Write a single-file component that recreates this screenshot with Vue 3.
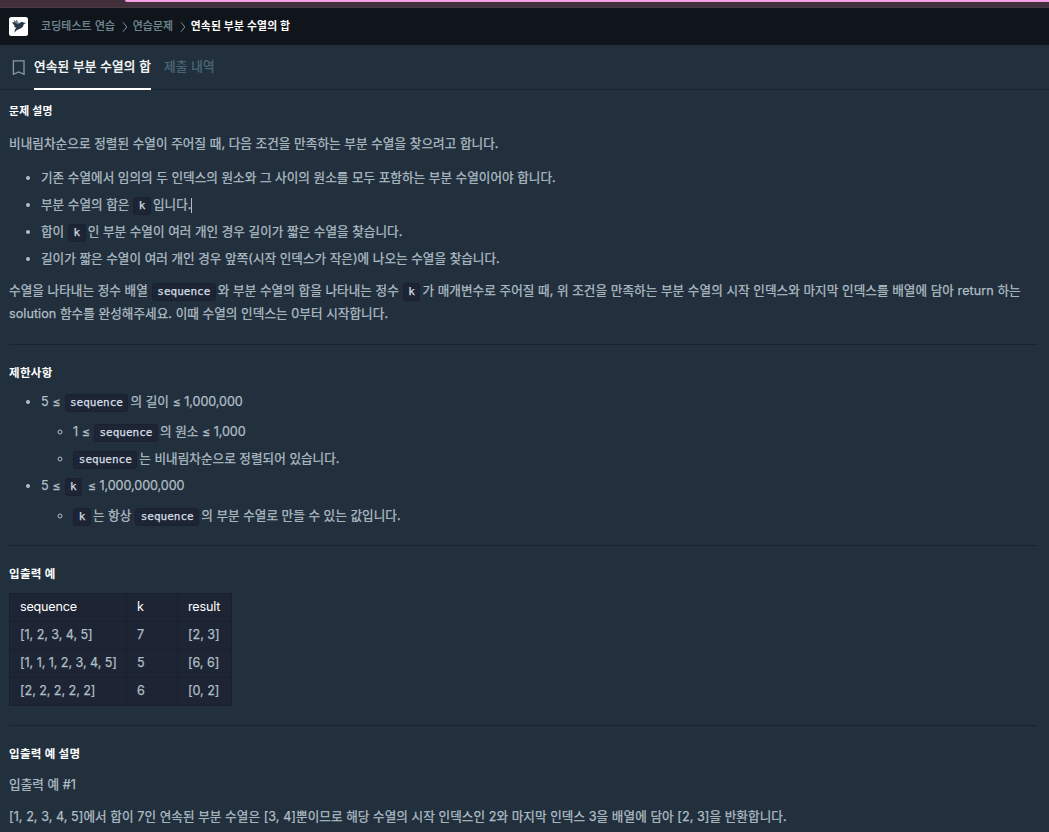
<template>
  <div class="page">
    <div class="window-strip">
      <div class="window-tab"></div>
    </div>
    <header class="navbar">
      <svg class="logo" viewBox="0 0 19 19">
        <rect width="19" height="19" rx="2.5" fill="#fff" />
        <path
          d="M3.2 5.2 L5.2 5.3 L4.8 3.3 L7 4.4 L7.4 2.8 L9.3 5.6 L9.8 7.1 C10.6 5.3 12.6 4.6 14.2 5.4 L17.4 6.1 L14.8 7 C14.5 9.7 12.8 11.4 10.3 12 L7.6 13.2 L5.4 15.7 L6 12.5 L7.4 10.8 C5.6 10.4 5 9.4 4.8 8.5 L6.4 8.4 C4.7 7.8 3.6 6.8 3.2 5.2 Z"
          fill="#263747"
        />
        <path d="M5.2 5.3 L4.8 3.3 L7 4.4 L7.4 2.8 L9.3 5.6 L9.2 7.2 Z" fill="#7b8792" />
      </svg>
      <nav class="breadcrumb">
        <template v-for="(crumb, i) in crumbs" :key="crumb">
          <svg v-if="i > 0" class="chevron" viewBox="0 0 6 10">
            <path d="M1 .3 L4.8 5 L1 9.7" fill="none" stroke="#78909c" stroke-width="1" />
          </svg>
          <span :class="i === crumbs.length - 1 ? 'current' : 'parent'">{{ crumb }}</span>
        </template>
      </nav>
    </header>
    <div class="tabs">
      <svg class="bookmark" viewBox="0 0 13 16">
        <path d="M1.4 .9 H12 V14.3 L6.7 11.9 L1.4 14.3 Z" fill="none" stroke="#8799a8" stroke-width="1.3" />
      </svg>
      <a
        v-for="tab in tabs"
        :key="tab"
        class="tab"
        :class="{ active: tab === activeTab }"
        @click="activeTab = tab"
      >{{ tab }}</a>
    </div>
    <main class="description">
      <h5 class="title">문제 설명</h5>
      <p>비내림차순으로 정렬된 수열이 주어질 때, 다음 조건을 만족하는 부분 수열을 찾으려고 합니다.</p>
      <ul class="conditions">
        <li>기존 수열에서 임의의 두 인덱스의 원소와 그 사이의 원소를 모두 포함하는 부분 수열이어야 합니다.</li>
        <li>부분 수열의 합은 <code>k</code>입니다.<i class="caret"></i></li>
        <li>합이 <code>k</code>인 부분 수열이 여러 개인 경우 길이가 짧은 수열을 찾습니다.</li>
        <li>길이가 짧은 수열이 여러 개인 경우 앞쪽(시작 인덱스가 작은)에 나오는 수열을 찾습니다.</li>
      </ul>
      <p>수열을 나타내는 정수 배열 <code>sequence</code>와 부분 수열의 합을 나타내는 정수 <code>k</code>가 매개변수로 주어질 때, 위 조건을 만족하는 부분 수열의 시작 인덱스와 마지막 인덱스를 배열에 담아 return 하는<br />solution 함수를 완성해주세요. 이때 수열의 인덱스는 0부터 시작합니다.</p>
      <hr />
      <h5>제한사항</h5>
      <ul class="limits">
        <li>5 ≤ <code>sequence</code>의 길이 <span class="num">≤ 1,000,000</span>
          <ul>
            <li>1 ≤ <code>sequence</code>의 원소 <span class="num">≤ 1,000</span></li>
            <li><code>sequence</code>는 비내림차순으로 정렬되어 있습니다.</li>
          </ul>
        </li>
        <li>5 ≤ <code>k</code> <span class="num">≤ 1,000,000,000</span>
          <ul>
            <li><code>k</code>는 항상 <code>sequence</code>의 부분 수열로 만들 수 있는 값입니다.</li>
          </ul>
        </li>
      </ul>
      <hr />
      <h5>입출력 예</h5>
      <table>
        <thead>
          <tr>
            <th class="col-sequence">sequence</th>
            <th class="col-k">k</th>
            <th class="col-result">result</th>
          </tr>
        </thead>
        <tbody>
          <tr v-for="row in examples" :key="row.sequence">
            <td>{{ row.sequence }}</td>
            <td>{{ row.k }}</td>
            <td>{{ row.result }}</td>
          </tr>
        </tbody>
      </table>
      <hr />
      <h5>입출력 예 설명</h5>
      <p>입출력 예 #1</p>
      <p>[1, 2, 3, 4, 5]에서 합이 7인 연속된 부분 수열은 [3, 4]뿐이므로 해당 수열의 시작 인덱스인 2와 마지막 인덱스 3을 배열에 담아 [2, 3]을 반환합니다.</p>
    </main>
  </div>
</template>

<script setup>
import { ref } from 'vue';

const crumbs = ['코딩테스트 연습', '연습문제', '연속된 부분 수열의 합'];
const tabs = ['연속된 부분 수열의 합', '제출 내역'];
const activeTab = ref(tabs[0]);

const examples = [
  { sequence: '[1, 2, 3, 4, 5]', k: 7, result: '[2, 3]' },
  { sequence: '[1, 1, 1, 2, 3, 4, 5]', k: 5, result: '[6, 6]' },
  { sequence: '[2, 2, 2, 2, 2]', k: 6, result: '[0, 2]' },
];
</script>

<style>
html,
body {
  margin: 0;
  background: #22303d;
  overflow: hidden;
}
</style>

<style scoped>
.page {
  height: 832px;
  overflow: hidden;
  background: #22303d;
  color: #b0bec5;
  font-family: Inter, "Noto Sans CJK KR", sans-serif;
  font-size: 12.6px;
  font-weight: 400;
  letter-spacing: 0.06px;
}

.window-strip {
  height: 8px;
  box-sizing: border-box;
  background: #432f3b;
  border-bottom: 1px solid #493b43;
}

.window-tab {
  height: 2px;
  margin-left: 125px;
  background: #f5a3e6;
  border-bottom-left-radius: 4px;
}

.navbar {
  display: flex;
  align-items: center;
  height: 37px;
  padding-left: 9px;
  background: #10151b;
}

.logo {
  width: 19px;
  height: 19px;
}

.breadcrumb {
  display: flex;
  align-items: center;
  margin-left: 13px;
  color: #78909c;
  font-size: 10.8px;
  letter-spacing: 0.2px;
  line-height: 18px;
  white-space: nowrap;
}

.parent {
  -webkit-text-stroke: 0.25px currentColor;
}

.current {
  color: #fff;
  font-weight: 700;
}

.chevron {
  width: 6px;
  height: 10px;
  margin: 0 5px 0 6.5px;
}

.tabs {
  display: flex;
  height: 45px;
  box-sizing: border-box;
  padding-left: 12px;
  border-bottom: 1px solid #172334;
}

.bookmark {
  width: 13px;
  height: 16px;
  margin: 15px 9px 0 0;
}

.tab {
  height: 45px;
  box-sizing: border-box;
  margin-right: 13px;
  color: #4c6a79;
  letter-spacing: 0.18px;
  line-height: 43px;
  white-space: nowrap;
  -webkit-text-stroke: 0.25px currentColor;
}

.tab.active {
  color: #fff;
  border-bottom: 2px solid #fff;
  -webkit-text-stroke-width: 0.4px;
}

.description {
  padding: 13px 12px 0 9px;
  line-height: 23px;
  white-space: nowrap;
}

h5 {
  margin: 0;
  color: #fff;
  font-size: 11.5px;
  font-weight: 700;
  letter-spacing: 0.3px;
  line-height: 18px;
}

h5.title {
  font-size: 10.8px;
}

p {
  margin: 9px 0 0;
}

h5 + p {
  margin-top: 10px;
}

.title + p {
  margin-top: 11px;
}

p,
li,
td {
  -webkit-text-stroke: 0.25px currentColor;
}

li {
  letter-spacing: 0.03px;
}

ul {
  margin: 0;
  padding-left: 32px;
}

.conditions {
  margin-top: 11px;
}

.conditions li {
  margin-bottom: 4px;
}

.limits {
  margin-top: 8px;
}

.limits ul {
  margin: 7px 0 4px;
}

.limits ul li + li {
  margin-top: 4px;
}

.num {
  letter-spacing: -0.07px;
}

code {
  display: inline-block;
  height: 18px;
  box-sizing: border-box;
  margin: 0 2px 0 0.3px;
  padding: 0 4.5px;
  border: 1px solid #1a2031;
  border-radius: 3px;
  background: #1d2433;
  color: #d5dfe6;
  font-family: "DejaVu Sans Mono", monospace;
  font-size: 11px;
  letter-spacing: 0;
  line-height: 16px;
}

.caret {
  display: inline-block;
  width: 1px;
  height: 15px;
  background: #b0bec5;
  vertical-align: -4px;
}

hr {
  height: 1px;
  margin: 19px 0;
  border: 0;
  background: #172334;
}

.limits + hr {
  margin-top: 18px;
}

table {
  width: 222px;
  margin-top: 10px;
  border-collapse: collapse;
  table-layout: fixed;
  background: #1d2433;
}

th,
td {
  height: 27px;
  box-sizing: border-box;
  padding: 0 8px 1px 10px;
  border: 1px solid #181f2e;
  letter-spacing: -0.06px;
  line-height: 26px;
  text-align: left;
}

th {
  color: #fff;
  font-weight: 400;
  letter-spacing: -0.2px;
}

.col-sequence {
  width: 117px;
}

.col-k {
  width: 51px;
}

.col-result {
  width: 54px;
}
</style>
